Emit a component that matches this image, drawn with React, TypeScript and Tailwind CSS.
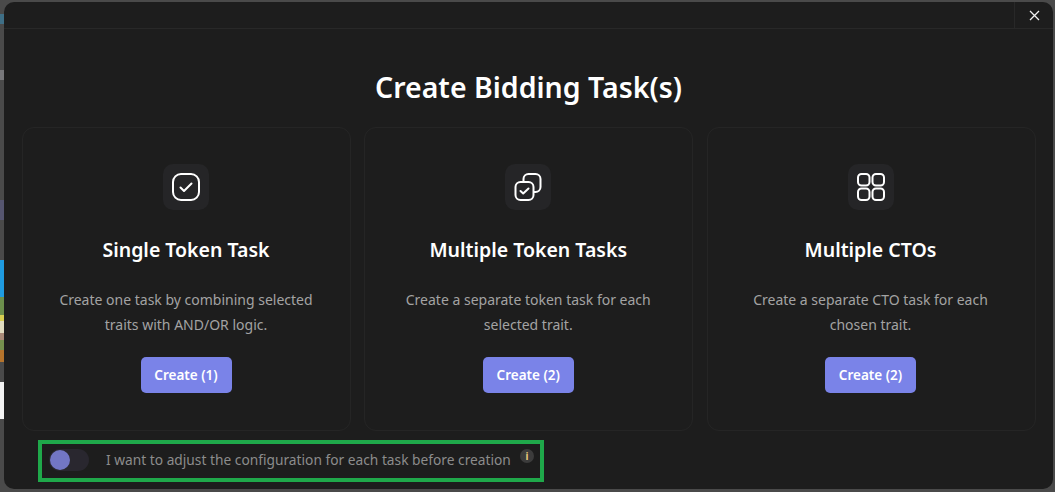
const cards = [
  {
    title: "Single Token Task",
    lines: ["Create one task by combining selected", "traits with AND/OR logic."],
    cta: "Create (1)",
    icon: "single",
  },
  {
    title: "Multiple Token Tasks",
    lines: ["Create a separate token task for each", "selected trait."],
    cta: "Create (2)",
    icon: "multi",
  },
  {
    title: "Multiple CTOs",
    lines: ["Create a separate CTO task for each", "chosen trait."],
    cta: "Create (2)",
    icon: "grid",
  },
];

// bits of the page showing behind the dialog, along the left edge
const leftStrip = [
  { h: "h-[14px]", bg: "bg-[#4a4a4a]" },
  { h: "h-[10px]", bg: "bg-[#3f6f86]" },
  { h: "h-[46px]", bg: "bg-[#4a4a4a]" },
  { h: "h-[10px]", bg: "bg-[#77777a]" },
  { h: "h-[120px]", bg: "bg-[#4a4a4a]" },
  { h: "h-[20px]", bg: "bg-[#565670]" },
  { h: "h-[40px]", bg: "bg-[#4a4a4a]" },
  { h: "h-[37px]", bg: "bg-[#1f9be0]" },
  { h: "h-[18px]", bg: "bg-[#6c8f4c]" },
  { h: "h-[6px]", bg: "bg-[#d8cf52]" },
  { h: "h-[12px]", bg: "bg-[#e0dcc0]" },
  { h: "h-[7px]", bg: "bg-[#a88a78]" },
  { h: "h-[10px]", bg: "bg-[#76904e]" },
  { h: "h-[12px]", bg: "bg-[#b5742c]" },
  { h: "h-[20px]", bg: "bg-[#4a4a4a]" },
  { h: "h-[37px]", bg: "bg-[#f2f2f2]" },
  { h: "h-[73px]", bg: "bg-[#4a4a4a]" },
];

function CardIcon({ kind }: { kind: string }) {
  return (
    <div className="flex h-[46px] w-[46px] items-center justify-center rounded-[10px] bg-[#252527]">
      <svg width="28" height="28" viewBox="0 0 28 28" fill="none" stroke="#fff" strokeWidth="2" strokeLinecap="round" strokeLinejoin="round">
        {kind === "single" && (
          <>
            <rect x="1" y="1" width="26" height="26" rx="8" />
            <path d="M8.500 14.500l3.500 3.500 7.500-7.500" />
          </>
        )}
        {kind === "multi" && (
          <>
            <path d="M9.500 9V6a5 5 0 0 1 5-5h7a5 5 0 0 1 5 5v8a5 5 0 0 1-5 5H20" />
            <rect x="1.500" y="9" width="18" height="18" rx="5" />
            <path d="M6.500 18l2.700 2.500 5.300-5" />
          </>
        )}
        {kind === "grid" && (
          <>
            <rect x="1" y="1" width="11.500" height="11.500" rx="3.500" />
            <rect x="15.500" y="1" width="11.500" height="11.500" rx="3.500" />
            <rect x="1" y="15.500" width="11.500" height="11.500" rx="3.500" />
            <rect x="15.500" y="15.500" width="11.500" height="11.500" rx="3.500" />
          </>
        )}
      </svg>
    </div>
  );
}

export default function App() {
  return (
    <div className="flex h-[492px] w-[1055px] overflow-hidden bg-[#4a4a4a] font-['Noto_Sans',sans-serif]">
      {/* backdrop sliver */}
      <div className="flex w-[4px] shrink-0 flex-col">
        {leftStrip.map((s, i) => (
          <div key={i} className={`${s.h} ${s.bg}`} />
        ))}
      </div>

      {/* dialog */}
      <div className="mb-[3px] mt-[2px] flex h-[487px] w-[1049px] shrink-0 flex-col rounded-[10px] bg-[#1d1d1d]">
        <div className="flex h-[27px] shrink-0 justify-end border-b border-[#282828]">
          <button className="flex h-[26px] w-[39px] items-center justify-center border-l border-[#282828] text-white">
            <svg width="11" height="11" viewBox="0 0 11 11" fill="none" stroke="#f2f2f2" strokeWidth="1.300">
              <path d="M1 1l9 9M10 1l-9 9" />
            </svg>
          </button>
        </div>

        <h1 className="mt-[38px] text-center text-[28.500px] font-semibold leading-[40px] text-white">
          Create Bidding Task(s)
        </h1>

        <div className="ml-[18px] mt-[20px] flex gap-[13.250px]">
          {cards.map((c) => (
            <div
              key={c.title}
              className="flex h-[304px] w-[329px] flex-col items-center rounded-[12px] border border-[#252525] pr-px pt-[36px]"
            >
              <CardIcon kind={c.icon} />
              <h2 className="mt-[26px] text-[19.500px] font-semibold leading-[28px] text-white">{c.title}</h2>
              <p className="mt-[23px] text-center text-[14px] leading-[25px] text-[#a3a3a3]">
                {c.lines[0]}
                <br />
                {c.lines[1]}
              </p>
              <button className="mt-[20px] h-[36px] w-[91px] rounded-[5px] bg-[#7a83e8] text-[13.500px] font-semibold text-white">
                {c.cta}
              </button>
            </div>
          ))}
        </div>

        {/* highlighted option row */}
        <div className="ml-[34px] mt-[9px] flex h-[42px] w-[506px] items-center border-[4px] border-[#1fa84a] pb-[2px] pl-[7px]">
          <div className="flex h-[22px] w-[40px] items-center rounded-full bg-[#29272f] pl-px">
            <div className="h-[20px] w-[20px] rounded-full bg-[#7276c4]" />
          </div>
          <span className="ml-[17px] text-[13.750px] text-[#8c8c8c]">
            I want to adjust the configuration for each task before creation
          </span>
          <span className="relative -top-[4px] ml-[9px] flex h-[14px] w-[14px] items-center justify-center rounded-full bg-[#3c3c3c] text-[10px] font-bold leading-none text-[#e8c77a]">
            i
          </span>
        </div>
      </div>
    </div>
  );
}
